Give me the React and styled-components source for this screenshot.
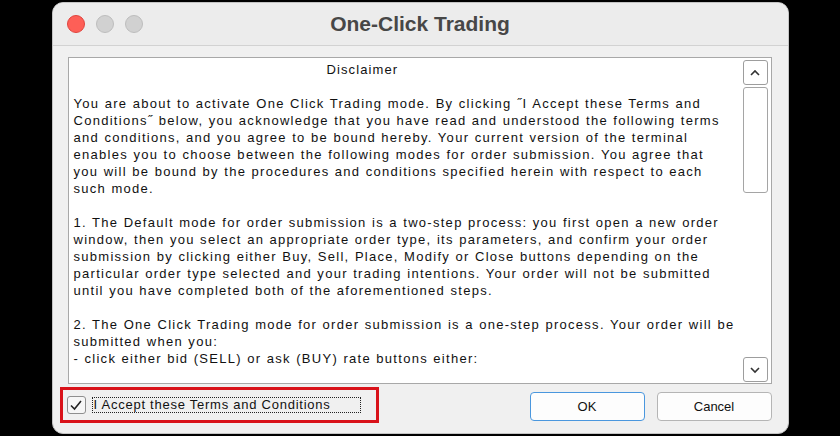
import React from "react";
import styled, { createGlobalStyle } from "styled-components";

const GlobalStyle = createGlobalStyle`
  html, body {
    margin: 0;
    padding: 0;
    background: #000;
  }
  body {
    width: 840px;
    height: 436px;
    overflow: hidden;
    font-family: "Liberation Sans", Arial, sans-serif;
  }
`;

const paragraphs = [
  [
    "You are about to activate One Click Trading mode. By clicking \u02DDI Accept these Terms and",
    "Conditions\u02DD below, you acknowledge that you have read and understood the following terms",
    "and conditions, and you agree to be bound hereby. Your current version of the terminal",
    "enables you to choose between the following modes for order submission. You agree that",
    "you will be bound by the procedures and conditions specified herein with respect to each",
    "such mode.",
  ],
  [
    "1. The Default mode for order submission is a two-step process: you first open a new order",
    "window, then you select an appropriate order type, its parameters, and confirm your order",
    "submission by clicking either Buy, Sell, Place, Modify or Close buttons depending on the",
    "particular order type selected and your trading intentions. Your order will not be submitted",
    "until you have completed both of the aforementioned steps.",
  ],
  [
    "2. The One Click Trading mode for order submission is a one-step process. Your order will be",
    "submitted when you:",
    "- click either bid (SELL) or ask (BUY) rate buttons either:",
  ],
];

const App = () => {
  return (
    <>
      <GlobalStyle />
      <Screen>
        <Window>
          <TitleBar>
            <Lights>
              <Light color="#fe5f57" border="#e0443e" />
              <Light color="#d1d1d1" border="#bdbdbd" />
              <Light color="#d1d1d1" border="#bdbdbd" />
            </Lights>
            <Title>One-Click Trading</Title>
            <span />
          </TitleBar>
          <Body>
            <TextBox>
              <TextArea>
                <Heading>Disclaimer</Heading>
                {paragraphs.map((lines, i) => (
                  <Paragraph key={i}>
                    {lines.map((line, j) => (
                      <Line key={j}>{line}</Line>
                    ))}
                  </Paragraph>
                ))}
              </TextArea>
              <ScrollBar>
                <ArrowButton>
                  <svg width="12" height="8" viewBox="0 0 12 8">
                    <path d="M2 6 L6 2 L10 6" fill="none" stroke="#333" strokeWidth="1.6" />
                  </svg>
                </ArrowButton>
                <Track>
                  <Thumb />
                </Track>
                <ArrowButton>
                  <svg width="12" height="8" viewBox="0 0 12 8">
                    <path d="M2 2 L6 6 L10 2" fill="none" stroke="#333" strokeWidth="1.6" />
                  </svg>
                </ArrowButton>
              </ScrollBar>
            </TextBox>
            <Footer>
              <Highlight>
                <CheckBox>
                  <svg width="14" height="12" viewBox="0 0 14 12">
                    <path d="M2 6.5 L5.5 10 L12 2" fill="none" stroke="#222" strokeWidth="1.6" />
                  </svg>
                </CheckBox>
                <Label>I Accept these Terms and Conditions</Label>
              </Highlight>
              <Buttons>
                <Button primary>OK</Button>
                <Button>Cancel</Button>
              </Buttons>
            </Footer>
          </Body>
        </Window>
      </Screen>
    </>
  );
};

const Screen = styled.div`
  display: flex;
  justify-content: center;
  padding-top: 2px;
  height: 436px;
  box-sizing: border-box;
`;

const Window = styled.div`
  width: 737px;
  height: 432px;
  box-sizing: border-box;
  border: 1px solid #c4c4c4;
  border-radius: 11px;
  background: #f0f0f0;
  overflow: hidden;
  display: flex;
  flex-direction: column;
`;

const TitleBar = styled.div`
  height: 42px;
  flex-shrink: 0;
  display: grid;
  grid-template-columns: 1fr auto 1fr;
  align-items: center;
  background: #ececec;
  border-bottom: 1px solid #d2d2d2;
`;

const Lights = styled.div`
  display: flex;
  gap: 11px;
  padding-left: 14px;
`;

const Light = styled.span`
  width: 18px;
  height: 18px;
  border-radius: 50%;
  box-sizing: border-box;
  background: ${(p) => p.color};
  border: 1px solid ${(p) => p.border};
`;

const Title = styled.div`
  font-size: 21px;
  font-weight: bold;
  color: #474747;
`;

const Body = styled.div`
  flex: 1;
  display: flex;
  flex-direction: column;
  padding: 11px 16px 0 15px;
`;

const TextBox = styled.div`
  height: 327px;
  box-sizing: border-box;
  border: 1px solid #a8a8a8;
  background: #fff;
  display: flex;
`;

const TextArea = styled.div`
  flex: 1;
  padding: 3px 0 0 5px;
  font-family: "Liberation Sans", Arial, sans-serif;
  font-size: 13px;
  line-height: 17px;
  color: #111;
`;

const Heading = styled.div`
  padding-left: 253px;
  margin-bottom: 17px;
  letter-spacing: 1.1px;
`;

const Paragraph = styled.div`
  margin-bottom: 17px;
`;

const Line = styled.div`
  white-space: nowrap;
  letter-spacing: 1.28px;
  word-spacing: 0.5px;
`;

const ScrollBar = styled.div`
  width: 25px;
  display: flex;
  flex-direction: column;
  gap: 2px;
  padding: 2px 3px 1px 0;
`;

const ArrowButton = styled.div`
  height: 25px;
  box-sizing: border-box;
  border: 1px solid #9d9d9d;
  border-radius: 3px;
  background: #fff;
  display: flex;
  align-items: center;
  justify-content: center;
`;

const Track = styled.div`
  flex: 1;
`;

const Thumb = styled.div`
  height: 106px;
  box-sizing: border-box;
  border: 1px solid #a5a5a5;
  border-radius: 3px;
  background: #fff;
`;

const Footer = styled.div`
  display: flex;
  align-items: center;
  justify-content: space-between;
  padding-top: 3px;
`;

const Highlight = styled.div`
  width: 319px;
  height: 36px;
  box-sizing: border-box;
  margin-left: -8px;
  border: 3px solid #d9121a;
  display: flex;
  align-items: center;
  gap: 6px;
  padding-left: 4px;
`;

const CheckBox = styled.div`
  width: 19px;
  height: 18px;
  box-sizing: border-box;
  border: 1px solid #8f8f8f;
  border-radius: 3px;
  background: #f6f6f6;
  display: flex;
  align-items: center;
  justify-content: center;
`;

const Label = styled.div`
  width: 269px;
  box-sizing: border-box;
  font-size: 13px;
  color: #111;
  padding: 0 1px;
  line-height: 14px;
  border: 1px dotted #222;
  letter-spacing: 0.75px;
  white-space: nowrap;
`;

const Buttons = styled.div`
  display: flex;
  gap: 12px;
  padding-top: 2px;
`;

const Button = styled.div`
  width: 115px;
  height: 29px;
  box-sizing: border-box;
  border: 1px solid ${(p) => (p.primary ? "#4a97de" : "#b5b5b5")};
  border-radius: 4px;
  background: #fdfdfd;
  display: flex;
  align-items: center;
  justify-content: center;
  font-size: 13px;
  color: #111;
`;

export default App;
